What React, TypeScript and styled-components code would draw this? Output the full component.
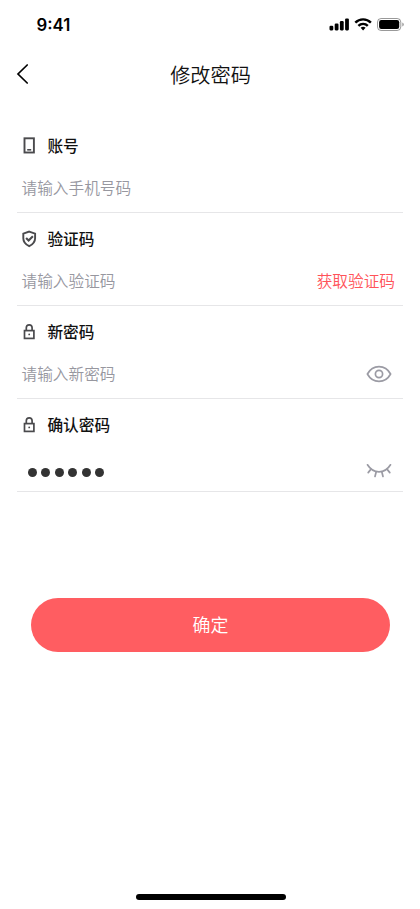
import React from 'react';
import styled, { createGlobalStyle } from 'styled-components';

const GlobalStyle = createGlobalStyle`
  * { box-sizing: border-box; }
  body {
    margin: 0;
    background: #fff;
    font-family: 'Noto Sans CJK SC', sans-serif;
  }
  svg { display: block; flex: none; }
`;

const Screen = styled.div`
  width: 420px;
  height: 909px;
  display: flex;
  flex-direction: column;
  background: #fff;
  overflow: hidden;
`;

const StatusBar = styled.header`
  height: 48px;
  padding: 0 15px 0 36.5px;
  display: flex;
  align-items: center;
  justify-content: space-between;
`;

const Clock = styled.time`
  padding-top: 1px;
  font: 600 16.8px/20px Inter, sans-serif;
  color: #000;
`;

const NavBar = styled.nav`
  height: 52px;
  padding: 0 16px;
  display: grid;
  grid-template-columns: 40px 1fr 40px;
  align-items: center;
`;

const BackButton = styled.button`
  padding: 0 0 1px;
  border: 0;
  background: none;
  width: 40px;
`;

const Title = styled.h1`
  margin: 0;
  padding: 2px 0 0 1px;
  font-size: 20.16px;
  line-height: 30px;
  font-weight: 350;
  text-align: center;
  color: #111;
`;

const Form = styled.form`
  margin: 20px 17px 0;
  display: flex;
  flex-direction: column;
`;

const Field = styled.div`
  height: 93px;
  padding: 13px 8px 0 5px;
  border-bottom: 1px solid #e6e6e8;
`;

const Label = styled.label`
  height: 24px;
  display: grid;
  grid-template-columns: 25.4px 1fr;
  align-items: center;
  font-size: 15.68px;
  line-height: 24px;
  font-weight: 500;
  color: #111;
`;

const LabelText = styled.span`
  padding-top: 1px;
`;

const Row = styled.div`
  height: 24px;
  margin-top: 19px;
  display: flex;
  align-items: center;
  justify-content: space-between;
`;

const Placeholder = styled.span`
  margin-left: -0.5px;
  font-size: 15.68px;
  line-height: 24px;
  font-weight: 350;
  color: #97979f;
`;

const CodeButton = styled.button`
  padding: 0;
  border: 0;
  background: none;
  font: 350 15.68px/24px 'Noto Sans CJK SC', sans-serif;
  color: #ff5359;
`;

const Dots = styled.span`
  display: flex;
  gap: 4.4px;
  padding: 10px 0 0 6px;
`;

const Dot = styled.i`
  width: 9px;
  height: 9px;
  border-radius: 50%;
  background: #333;
`;

const EyeButton = styled.button<{ $drop?: number }>`
  padding: ${(p) => p.$drop ?? 0}px 2.6px 0 0;
  border: 0;
  background: none;
`;

const Submit = styled.button`
  width: 359px;
  height: 53.6px;
  margin: 106px 0 0 14px;
  padding: 0;
  border: 0;
  border-radius: 27px;
  background: #ff5d61;
  color: #fff;
  font: 350 17.92px/53px 'Noto Sans CJK SC', sans-serif;
`;

const HomeIndicator = styled.div`
  width: 150px;
  height: 5.6px;
  margin: auto auto 9px 135.5px;
  border-radius: 3px;
  background: #000;
`;

const StatusIcons = () => (
  <svg width="76" height="16" viewBox="0 0 76 16">
    <rect x="0.5" y="9.8" width="3.8" height="4.6" rx="1.1" />
    <rect x="5.7" y="7.6" width="3.8" height="6.8" rx="1.1" />
    <rect x="10.9" y="5.1" width="3.8" height="9.3" rx="1.1" />
    <rect x="16.1" y="2.5" width="3.8" height="11.9" rx="1.1" />
    <g fill="none" stroke="#000" strokeWidth="2.4">
      <path d="M26.3 6.6a11 11 0 0 1 15.6 0" />
      <path d="M29.4 9.8a6.7 6.7 0 0 1 9.4 0" />
    </g>
    <path d="M31.6 11.8a3.7 3.7 0 0 1 5 0l-2.5 2.6z" />
    <rect x="48.5" y="2.5" width="23.3" height="12" rx="3.6" fill="none" stroke="#000" strokeOpacity=".4" />
    <rect x="50.1" y="4.1" width="20.1" height="8.8" rx="2.2" />
    <path d="M73.4 6.5v4q1.3-.6 1.3-2t-1.3-2" opacity=".45" />
  </svg>
);

const BackIcon = () => (
  <svg width="14" height="22" viewBox="0 0 14 22">
    <path d="M11.2 2 2 11l9.2 9" fill="none" stroke="#000" strokeWidth="1.7" strokeLinecap="round" />
  </svg>
);

const PhoneIcon = () => (
  <svg width="15" height="18" viewBox="0 0 15 18" fill="none" stroke="#4a4a4d">
    <rect x="2.5" y="1.3" width="9.4" height="14.2" strokeWidth="1.9" />
    <path d="M5.2 12.8h4" strokeWidth="1.6" />
  </svg>
);

const ShieldIcon = () => (
  <svg width="15" height="18" viewBox="0 0 15 18" fill="none" stroke="#4a4a4d" strokeWidth="1.9">
    <path d="M7.2 1.6 13.1 3.7v4.5c0 3.9-2.3 6.2-5.9 7.9-3.6-1.7-5.9-4-5.9-7.9V3.7z" />
    <path d="m4.1 8.1 2.5 2.5 4.3-4.3" strokeWidth="2.1" />
  </svg>
);

const LockIcon = () => (
  <svg width="15" height="18" viewBox="0 0 15 18" fill="none" stroke="#4a4a4d" strokeWidth="1.7">
    <rect x="2.5" y="7.6" width="9.4" height="7.8" />
    <path d="M4.3 7.6V4.8a2.9 3 0 0 1 5.8 0V7.6" />
    <circle cx="7.2" cy="11.4" r=".9" fill="#4a4a4d" stroke="none" />
  </svg>
);

const EyeIcon = () => (
  <svg width="26" height="18" viewBox="0 0 26 18" fill="none" stroke="#9b9ba4" strokeWidth="1.7">
    <path d="M1.4 9C4 4.2 8 1.6 13 1.6S22 4.2 24.6 9C22 13.8 18 16.4 13 16.4S4 13.8 1.4 9Z" strokeLinejoin="round" />
    <circle cx="13" cy="9" r="3.6" />
  </svg>
);

const ClosedEyeIcon = () => (
  <svg width="26" height="16" viewBox="0 0 26 16" fill="none" stroke="#9b9ba4" strokeWidth="1.7" strokeLinecap="round">
    <path d="M1.5 1.8C4.2 6.2 8 8.8 13 8.8S21.8 6.2 24.5 1.8" />
    <path d="M4.8 6.4 2.2 9.6M10.2 8.7 9 13.5M15.8 8.7l1.2 4.8M21.2 6.4 23.8 9.6" />
  </svg>
);

type FieldProps = { icon: React.ReactNode; label: string; children: React.ReactNode };

const FormField = ({ icon, label, children }: FieldProps) => (
  <Field>
    <Label>{icon}<LabelText>{label}</LabelText></Label>
    <Row>{children}</Row>
  </Field>
);

export default function App() {
  return (
    <>
      <GlobalStyle />
      <Screen>
        <StatusBar>
          <Clock>9:41</Clock>
          <StatusIcons />
        </StatusBar>
        <NavBar>
          <BackButton type="button" aria-label="返回"><BackIcon /></BackButton>
          <Title>修改密码</Title>
        </NavBar>
        <Form>
          <FormField icon={<PhoneIcon />} label="账号">
            <Placeholder>请输入手机号码</Placeholder>
          </FormField>
          <FormField icon={<ShieldIcon />} label="验证码">
            <Placeholder>请输入验证码</Placeholder>
            <CodeButton type="button">获取验证码</CodeButton>
          </FormField>
          <FormField icon={<LockIcon />} label="新密码">
            <Placeholder>请输入新密码</Placeholder>
            <EyeButton type="button" aria-label="显示密码"><EyeIcon /></EyeButton>
          </FormField>
          <FormField icon={<LockIcon />} label="确认密码">
            <Dots>{Array.from({ length: 6 }, (_, i) => <Dot key={i} />)}</Dots>
            <EyeButton type="button" aria-label="隐藏密码" $drop={7}><ClosedEyeIcon /></EyeButton>
          </FormField>
          <Submit type="button">确定</Submit>
        </Form>
        <HomeIndicator />
      </Screen>
    </>
  );
}
